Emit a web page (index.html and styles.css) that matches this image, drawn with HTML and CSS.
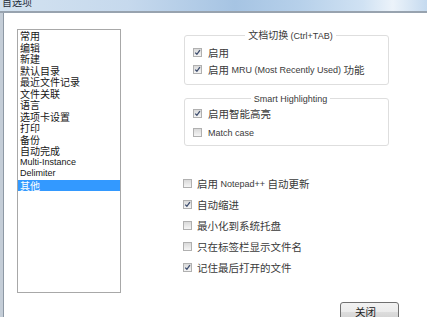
FILE: index.html
```html
<!DOCTYPE html>
<html lang="zh-CN">
<head>
<meta charset="utf-8">
<title>首选项</title>
<link rel="stylesheet" href="styles.css">
</head>
<body>
<div class="win">
  <div class="titlebar"><span class="title">首选项</span></div>
  <div class="client">
    <div class="main">
      <div class="listbox">
        <div class="item">常用</div>
        <div class="item">编辑</div>
        <div class="item">新建</div>
        <div class="item">默认目录</div>
        <div class="item">最近文件记录</div>
        <div class="item">文件关联</div>
        <div class="item">语言</div>
        <div class="item">选项卡设置</div>
        <div class="item">打印</div>
        <div class="item">备份</div>
        <div class="item">自动完成</div>
        <div class="item en">Multi-Instance</div>
        <div class="item en">Delimiter</div>
        <div class="item sel">其他</div>
      </div>
      <div class="panel">
        <fieldset class="group g1">
          <legend>文档切换 <span class="en">(Ctrl+TAB)</span></legend>
          <div class="row"><span class="cb on"><svg viewBox="0 0 7 7"><path d="M1.2 3.6 L2.9 5.3 L5.9 1.2"/></svg></span>启用</div>
          <div class="row"><span class="cb on"><svg viewBox="0 0 7 7"><path d="M1.2 3.6 L2.9 5.3 L5.9 1.2"/></svg></span>启用<span class="en">&nbsp;MRU (Most Recently Used)&nbsp;</span>功能</div>
        </fieldset>
        <fieldset class="group g2">
          <legend><span class="en">Smart Highlighting</span></legend>
          <div class="row"><span class="cb on"><svg viewBox="0 0 7 7"><path d="M1.2 3.6 L2.9 5.3 L5.9 1.2"/></svg></span>启用智能高亮</div>
          <div class="row"><span class="cb"></span><span class="en">Match case</span></div>
        </fieldset>
        <div class="opts">
          <div class="row"><span class="cb"></span>启用<span class="en">&nbsp;Notepad++&nbsp;</span>自动更新</div>
          <div class="row"><span class="cb on"><svg viewBox="0 0 7 7"><path d="M1.2 3.6 L2.9 5.3 L5.9 1.2"/></svg></span>自动缩进</div>
          <div class="row"><span class="cb"></span>最小化到系统托盘</div>
          <div class="row"><span class="cb"></span>只在标签栏显示文件名</div>
          <div class="row"><span class="cb on"><svg viewBox="0 0 7 7"><path d="M1.2 3.6 L2.9 5.3 L5.9 1.2"/></svg></span>记住最后打开的文件</div>
        </div>
      </div>
    </div>
    <div class="footer">
      <button class="btn" type="button">关闭</button>
    </div>
  </div>
</div>
</body>
</html>
```
FILE: styles.css
```css
* { box-sizing: border-box; }
html, body { margin: 0; padding: 0; }
body {
  width: 427px;
  height: 317px;
  overflow: hidden;
  background: #fff;
  font-family: "Noto Sans CJK SC", "Liberation Sans", sans-serif;
  font-size: 10.5px;
  color: #222;
}
.en { font-family: "Liberation Sans", "Noto Sans CJK SC", sans-serif; font-size: 9px; }
.win { height: 317px; display: flex; flex-direction: column; }
.titlebar {
  height: 13px;
  flex: none;
  overflow: hidden;
  padding-left: 2px;
  border-bottom: 2px solid #98a3af;
  background: linear-gradient(90deg, #d3e2f0 0%, #c6d9ed 30%, #a6c4e3 55%, #b6d0ea 70%, #d0e2f3 85%, #ecf3fa 92%, #c5daef 100%);
}
.title { display: block; font-size: 10px; line-height: 10px; margin-top: -3px; color: #1e2a36; }
.client {
  flex: 1;
  display: flex;
  flex-direction: column;
  border-left: 3px solid #c4cdd7;
  box-shadow: inset 1px 0 #8d98a4;
  padding-left: 14px;
}
.main { display: flex; padding-top: 16px; }
.listbox {
  flex: none;
  width: 104px;
  height: 264px;
  border: 1px solid #a8a8a8;
  color: #161616;
  font-size: 10px;
}
.item { height: 11.5px; line-height: 11.5px; padding-left: 2px; white-space: nowrap; }
.item.en { font-size: 9px; }
.item.sel { background: #3399ff; color: #fff; }
.panel { margin-left: 62px; width: 207px; color: #3a3a3a; }
.group {
  margin: 1px 0 0 1px;
  width: 205px;
  border: 1px solid #dedede;
  border-radius: 3px;
  padding: 3px 0 6px 8px;
  min-width: 0;
}
.g2 { margin-top: 8px; padding-top: 0; padding-bottom: 3px; }
legend { margin: 0 auto; padding: 0 3px; line-height: 10px; font-size: 10px; }
.row { display: flex; align-items: center; height: 17px; white-space: nowrap; line-height: 12px; }
.g2 .row { height: 19px; }
.cb {
  flex: none;
  width: 9px;
  height: 9px;
  margin-right: 6px;
  border: 1px solid #b0b0b0;
  background: linear-gradient(#d9d9d9, #f5f5f5);
  display: flex;
  align-items: center;
  justify-content: center;
}
.cb svg { width: 7px; height: 7px; }
.cb path { fill: none; stroke: #3d4d6e; stroke-width: 1.3; }
.opts { margin-top: 27px; }
.opts .row { height: 21px; }
.opts .cb { margin-right: 5px; }
.footer { padding-top: 9px; padding-left: 323px; }
.btn {
  width: 59px;
  height: 20px;
  padding: 0 8px 0 0;
  border: 1px solid #707070;
  border-radius: 3px;
  background: linear-gradient(#f2f2f2 0%, #ebebeb 50%, #dddddd 51%, #cfcfcf 100%);
  font-family: "Noto Sans CJK SC", sans-serif;
  font-size: 10.5px;
  color: #222;
  line-height: 18px;
}
```
